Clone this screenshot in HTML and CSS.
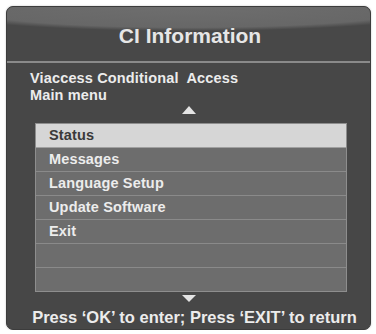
FILE: index.html
```
<!DOCTYPE html>
<html>
<head>
<meta charset="utf-8">
<link rel="stylesheet" href="styles.css">
</head>
<body>
<div class="panel">
  <div class="header"><span class="title">CI Information</span></div>
  <div class="rule"></div>
  <div class="info">
    <div>Viaccess Conditional&nbsp; Access</div>
    <div>Main menu</div>
  </div>
  <div class="arrow up"></div>
  <ul class="menu">
    <li class="sel">Status</li>
    <li>Messages</li>
    <li>Language Setup</li>
    <li>Update Software</li>
    <li>Exit</li>
    <li></li>
    <li></li>
  </ul>
  <div class="arrow down"></div>
  <div class="footer">Press ‘OK’ to enter; Press ‘EXIT’ to return</div>
</div>
</body>
</html>
```
FILE: styles.css
```
html, body {
  margin: 0;
  padding: 0;
  background: #ffffff;
}
body {
  font-family: "Liberation Sans", Arial, sans-serif;
  font-weight: bold;
  color: #ececec;
}
.panel {
  margin: 6px 0 0 6px;
  width: 365px;
  height: 324px;
  box-sizing: border-box;
  border-radius: 7px;
  background: #474747;
  border: 1px solid #3c3c3c;
  overflow: hidden;
  box-shadow: 0 0 2px rgba(0,0,0,0.25);
}
.header {
  height: 54px;
  box-sizing: border-box;
  padding-top: 17px;
  text-align: center;
  background:
    radial-gradient(ellipse 75% 24px at 50% 0, #6e6e6e 0, #676767 85%, rgba(71,71,71,0) 100%),
    #484848;
}
.title {
  font-size: 21px;
  line-height: 24px;
  color: #e6e6e6;
  display: inline-block;
  padding-left: 3px;
}
.rule {
  height: 2px;
  background: #8a8a8a;
}
.info {
  padding: 7px 0 0 23px;
  font-size: 14.5px;
  line-height: 16.5px;
  letter-spacing: 0.15px;
  height: 33px;
}
.arrow {
  width: 0;
  height: 0;
  margin-left: auto;
  margin-right: auto;
  border-left: 7px solid transparent;
  border-right: 7px solid transparent;
}
.arrow.up {
  margin-top: 3px;
  border-bottom: 8px solid #e4e4e4;
}
.arrow.down {
  margin-top: 3px;
  border-top: 7px solid #e4e4e4;
}
.menu {
  list-style: none;
  margin: 9px 0 0 28px;
  padding: 0;
  width: 310px;
  border: 1px solid #8e8e8e;
  background: #6d6d6d;
}
.menu li {
  height: 23px;
  line-height: 23px;
  padding-left: 13px;
  font-size: 14.5px;
  letter-spacing: 0.15px;
  color: #ececec;
  border-bottom: 1px solid #8a8a8a;
}
.menu li:last-child {
  border-bottom: none;
}
.menu li.sel {
  background: #d6d6d6;
  color: #3a3a3a;
  border-bottom-color: #a0a0a0;
}
.footer {
  margin-top: 6px;
  padding-left: 12px;
  font-size: 16.5px;
  line-height: 18px;
  text-align: center;
  color: #ececec;
  white-space: nowrap;
}
```
